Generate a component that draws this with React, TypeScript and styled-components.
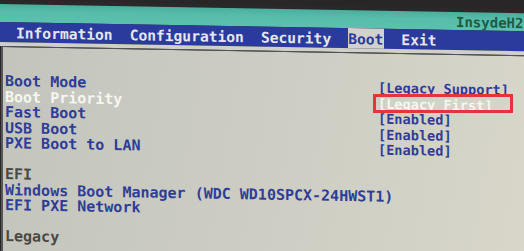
import React from "react";
import styled, { createGlobalStyle } from "styled-components";

const GlobalStyle = createGlobalStyle`
  html, body {
    margin: 0;
    padding: 0;
    background: #282627;
    overflow: hidden;
  }
`;

const FONT = `"DejaVu Sans Mono", "Liberation Mono", monospace`;

const Viewport = styled.div`
  position: relative;
  width: 524px;
  height: 251px;
  overflow: hidden;
  background: #282627;
`;

const Screen = styled.div`
  width: 540px;
  height: 262px;
  display: flex;
  flex-direction: column;
  transform: skewY(1deg);
  transform-origin: 0 0;
  font-family: ${FONT};
  font-weight: bold;
`;

const TopEdge = styled.div`
  height: 4px;
  background: #2a2829;
`;

const TitleBar = styled.div`
  height: 18px;
  display: flex;
  align-items: flex-end;
  padding-left: 456px;
  background: linear-gradient(180deg, #4aae9c 0%, #57bcaa 40%, #5cc0ae 100%);
  overflow: hidden;
`;

const Brand = styled.span`
  font-size: 14px;
  line-height: 16px;
  color: #1d5b45;
  white-space: nowrap;
  letter-spacing: 0px;
`;

const MenuBar = styled.div`
  height: 20px;
  display: flex;
  align-items: stretch;
  gap: 17px;
  padding-left: 16px;
  background: #2b3b9d;
`;

const MenuItem = styled.div<{ $active?: boolean }>`
  display: flex;
  align-items: center;
  padding: ${(p) => (p.$active ? "1px 1px 0 0" : "1px 0 0 0")};
  font-size: 14.6px;
  color: ${(p) => (p.$active ? "#2b3b9d" : "#e4e6f0")};
  background: ${(p) => (p.$active ? "#d2d2ca" : "transparent")};
  white-space: nowrap;
`;

const Gap = styled.div`
  height: 4px;
  background: #cfd0c8;
`;

const Content = styled.div`
  flex: 1;
  margin-left: 1px;
  border-top: 1px solid #56565a;
  border-left: 2px solid #56565a;
  padding: 27px 0 0 2px;
  background: linear-gradient(100deg, #c3c5bd 0%, #ccccc3 45%, #d9d7ca 100%);
  display: flex;
  flex-direction: column;
`;

const Row = styled.div`
  display: grid;
  grid-template-columns: 373px auto;
  height: 15.5px;
  align-items: center;
  white-space: nowrap;
`;

type Tone = "blue" | "white" | "gray";

const toneColor = (t: Tone) =>
  t === "white" ? "#f6f6f1" : t === "gray" ? "#4a4842" : "#2f3d96";

const Label = styled.span<{ $tone: Tone }>`
  font-size: 15px;
  line-height: 15.5px;
  color: ${(p) => toneColor(p.$tone)};
`;

const Value = styled.span<{ $tone: Tone }>`
  font-size: 13.6px;
  line-height: 15.5px;
  color: ${(p) => toneColor(p.$tone)};
`;

const Highlight = styled.div`
  position: absolute;
  left: 373px;
  top: 94px;
  width: 140px;
  height: 19px;
  box-sizing: border-box;
  border: 3px solid #e3363b;
  pointer-events: none;
`;

const menu = ["Information", "Configuration", "Security", "Boot", "Exit"];

const rows: { label: string; tone: Tone; value?: string }[] = [
  { label: "Boot Mode", tone: "blue", value: "[Legacy Support]" },
  { label: "Boot Priority", tone: "white", value: "[Legacy First]" },
  { label: "Fast Boot", tone: "blue", value: "[Enabled]" },
  { label: "USB Boot", tone: "blue", value: "[Enabled]" },
  { label: "PXE Boot to LAN", tone: "blue", value: "[Enabled]" },
  { label: "", tone: "blue" },
  { label: "EFI", tone: "gray" },
  { label: "Windows Boot Manager (WDC WD10SPCX-24HWST1)", tone: "blue" },
  { label: "EFI PXE Network", tone: "blue" },
  { label: "", tone: "blue" },
  { label: "Legacy", tone: "gray" },
];

export default function App() {
  return (
    <>
      <GlobalStyle />
      <Viewport>
        <Screen>
          <TopEdge />
          <TitleBar>
            <Brand>InsydeH2O Setup Utility</Brand>
          </TitleBar>
          <MenuBar>
            {menu.map((m) => (
              <MenuItem key={m} $active={m === "Boot"}>
                {m}
              </MenuItem>
            ))}
          </MenuBar>
          <Gap />
          <Content>
            {rows.map((r, i) => (
              <Row key={i}>
                <Label $tone={r.tone}>{r.label}</Label>
                {r.value ? <Value $tone={r.tone}>{r.value}</Value> : <span />}
              </Row>
            ))}
          </Content>
        </Screen>
        <Highlight />
      </Viewport>
    </>
  );
}
